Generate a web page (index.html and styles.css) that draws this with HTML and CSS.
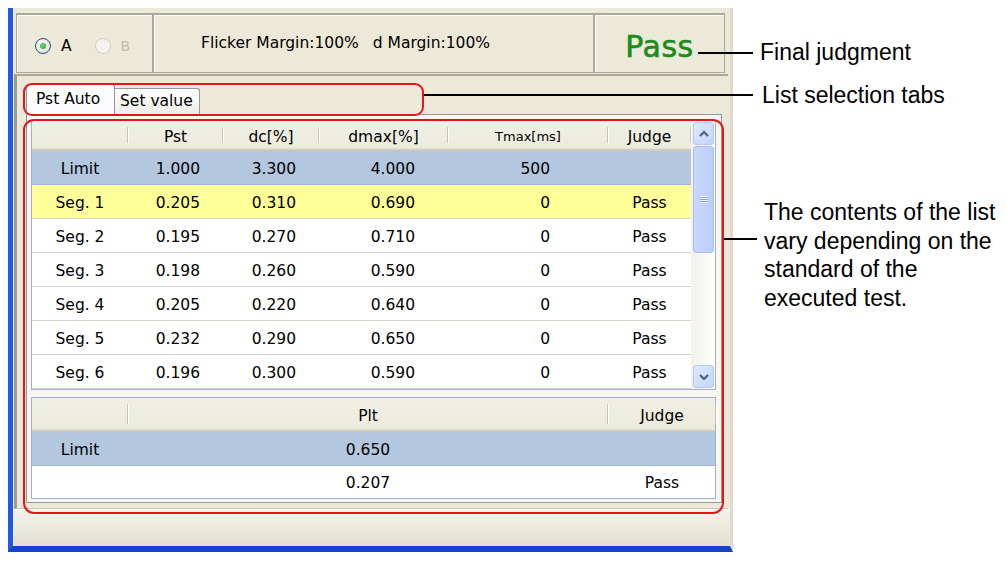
FILE: index.html
```html
<!DOCTYPE html>
<html>
<head>
  <title>Flicker Judgment</title>
  <link rel="stylesheet" href="styles.css">
</head>
<body>
  <div class="window">
    <div class="top-panel">
      <div class="channel-cell">
        <span class="radio checked"><span class="radio-circle"></span>A</span>
        <span class="radio disabled"><span class="radio-circle"></span>B</span>
      </div>
      <div class="margin-cell">
        <span>Flicker Margin:100%</span>
        <span>d Margin:100%</span>
      </div>
      <div class="judge-cell">Pass</div>
    </div>

    <div class="tabs-area">
      <div class="tabs">
        <div class="tab active">Pst Auto</div>
        <div class="tab">Set value</div>
      </div>

      <div class="tab-panel">
        <div class="list pst-list">
          <div class="grid">
            <div class="row head">
              <div class="th"></div>
              <div class="th">Pst</div>
              <div class="th">dc[%]</div>
              <div class="th">dmax[%]</div>
              <div class="th small">Tmax[ms]</div>
              <div class="th">Judge</div>
            </div>
            <div class="row limit">
              <div class="td label">Limit</div>
              <div class="td">1.000</div>
              <div class="td">3.300</div>
              <div class="td">4.000</div>
              <div class="td">500</div>
              <div class="td judge"></div>
            </div>
            <div class="row selected">
              <div class="td label">Seg. 1</div>
              <div class="td">0.205</div>
              <div class="td">0.310</div>
              <div class="td">0.690</div>
              <div class="td">0</div>
              <div class="td judge">Pass</div>
            </div>
            <div class="row">
              <div class="td label">Seg. 2</div>
              <div class="td">0.195</div>
              <div class="td">0.270</div>
              <div class="td">0.710</div>
              <div class="td">0</div>
              <div class="td judge">Pass</div>
            </div>
            <div class="row">
              <div class="td label">Seg. 3</div>
              <div class="td">0.198</div>
              <div class="td">0.260</div>
              <div class="td">0.590</div>
              <div class="td">0</div>
              <div class="td judge">Pass</div>
            </div>
            <div class="row">
              <div class="td label">Seg. 4</div>
              <div class="td">0.205</div>
              <div class="td">0.220</div>
              <div class="td">0.640</div>
              <div class="td">0</div>
              <div class="td judge">Pass</div>
            </div>
            <div class="row">
              <div class="td label">Seg. 5</div>
              <div class="td">0.232</div>
              <div class="td">0.290</div>
              <div class="td">0.650</div>
              <div class="td">0</div>
              <div class="td judge">Pass</div>
            </div>
            <div class="row">
              <div class="td label">Seg. 6</div>
              <div class="td">0.196</div>
              <div class="td">0.300</div>
              <div class="td">0.590</div>
              <div class="td">0</div>
              <div class="td judge">Pass</div>
            </div>
          </div>

          <div class="scrollbar">
            <div class="sb-btn">
              <svg width="14" height="10" viewBox="0 0 14 10"><path d="M3 7 L7 3 L11 7" fill="none" stroke="#4d6185" stroke-width="2.2"/></svg>
            </div>
            <div class="sb-thumb"><span class="grip"></span></div>
            <div class="sb-track"></div>
            <div class="sb-btn">
              <svg width="14" height="10" viewBox="0 0 14 10"><path d="M3 3 L7 7 L11 3" fill="none" stroke="#4d6185" stroke-width="2.2"/></svg>
            </div>
          </div>
        </div>

        <div class="list plt-list">
          <div class="row head">
            <div class="th"></div>
            <div class="th">Plt</div>
            <div class="th">Judge</div>
          </div>
          <div class="row limit">
            <div class="td label">Limit</div>
            <div class="td">0.650</div>
            <div class="td"></div>
          </div>
          <div class="row last">
            <div class="td label"></div>
            <div class="td">0.207</div>
            <div class="td">Pass</div>
          </div>
        </div>
      </div>
    </div>

    <div class="status-bar"></div>
  </div>

  <!-- callouts -->
  <div class="mark mark-tabs"></div>
  <div class="mark mark-list"></div>
  <div class="leader leader-judge"></div>
  <div class="leader leader-tabs"></div>
  <div class="leader leader-list"></div>
  <div class="note note-judge">Final judgment</div>
  <div class="note note-tabs">List selection tabs</div>
  <div class="note note-list">The contents of the list vary depending on the standard of the executed test.</div>
</body>
</html>
```

FILE: styles.css
```css
body {
  margin: 0;
  width: 1006px;
  height: 565px;
  background: #ffffff;
  font-family: "DejaVu Sans", sans-serif;
  font-size: 15.5px;
  color: #000000;
  position: relative;
  overflow: hidden;
}

.window {
  margin: 8px 0 0 8px;
  width: 725px;
  height: 544px;
  box-sizing: border-box;
  background: #ece9d8;
  border-left: 5px solid #2358e0;
  border-right: 3px solid #dedbce;
  border-bottom: 6px solid #1442c9;
  padding-top: 5px;
}

/* top info panel */
.top-panel {
  display: flex;
  width: 709px;
  height: 60px;
  margin-left: 3px;
  box-sizing: border-box;
  border: 1px solid #aca899;
  border-top-width: 2px;
  box-shadow: inset 1px 1px 0 #ffffff;
}

.channel-cell {
  width: 135px;
  display: flex;
  align-items: center;
  padding: 4px 0 0 18px;
  box-sizing: border-box;
  gap: 23px;
}

.radio {
  display: flex;
  align-items: center;
  gap: 10px;
}

.radio-circle {
  width: 16px;
  height: 16px;
  border-radius: 50%;
  box-sizing: border-box;
  border: 1px solid #1c5180;
  background: radial-gradient(circle at 40% 40%, #ffffff, #dcdad0);
  position: relative;
}

.radio.checked .radio-circle:after {
  content: "";
  position: absolute;
  left: 4px;
  top: 4px;
  width: 6px;
  height: 6px;
  border-radius: 50%;
  background: radial-gradient(circle at 40% 40%, #6fe06f, #1f9b1f);
}

.radio.disabled {
  color: #bdbaac;
  font-size: 14px;
}

.radio.disabled .radio-circle {
  border-color: #d2d0c4;
  background: #f4f3ee;
}

.margin-cell {
  width: 441px;
  display: flex;
  align-items: center;
  gap: 14px;
  padding: 0 0 2px 47px;
  box-sizing: border-box;
  border-left: 2px solid #aca899;
  box-shadow: inset 1px 0 0 #ffffff;
}

.judge-cell {
  flex: 1;
  display: flex;
  align-items: center;
  justify-content: center;
  padding-top: 6px;
  border-left: 2px solid #aca899;
  box-shadow: inset 1px 0 0 #ffffff;
  color: #1a8c1a;
  font-size: 30px;
  letter-spacing: 0.5px;
  -webkit-text-stroke: 0.6px #1a8c1a;
}

/* tab control */
.tabs-area {
  width: 714px;
  height: 435px;
  margin: 1px 0 0 1px;
  box-sizing: border-box;
  border-top: 2px solid #aca899;
  border-left: 3px solid #9d9b8e;
  border-bottom: 1px solid #c9c6b6;
  padding: 8px 0 0 9px;
}

.tabs {
  display: flex;
  align-items: flex-end;
  height: 30px;
}

.tab {
  height: 26px;
  box-sizing: border-box;
  border: 1px solid #919b9c;
  border-bottom: none;
  border-left: none;
  border-radius: 0 3px 0 0;
  background: linear-gradient(#ffffff, #eeede5);
  padding: 3px 6px 0 5px;
  white-space: nowrap;
}

.tab.active {
  height: 31px;
  margin-bottom: -1px;
  width: 89px;
  border-left: 1px solid #919b9c;
  border-radius: 3px 3px 0 0;
  background: #fcfcfe;
  padding: 5px 0 0 9px;
  position: relative;
}

.tab-panel {
  width: 696px;
  height: 389px;
  box-sizing: border-box;
  border: 1px solid #919b9c;
  background: #f7f6f1;
  padding: 5px 5px 0 4px;
}

/* list views */
.list {
  border: 1px solid #9db2cf;
  background: #ffffff;
}

.pst-list {
  display: flex;
  height: 270px;
  box-sizing: border-box;
}

.plt-list {
  margin-top: 7px;
}

.row {
  display: grid;
  height: 34px;
  box-sizing: border-box;
  border-bottom: 1px solid #d6d4cb;
  align-items: center;
}

.pst-list .row {
  grid-template-columns: 96px 95px 96px 129px 160px 83px;
}

.plt-list .row {
  grid-template-columns: 96px 480px 108px;
}

.row.head {
  height: 30px;
  border-bottom: none;
  background: linear-gradient(#f1f0e7, #ebeadb);
  box-shadow: inset 0 -1px 0 #cbc7b8, inset 0 -2px 0 #d6d2c2, inset 0 -3px 0 #e2decd;
}

.plt-list .row.head {
  height: 34px;
}

.row.limit {
  background: #b3c7df;
  border-bottom-color: #a4b6cc;
}

.row.selected {
  background: #ffff99;
}

.row.last {
  border-bottom: none;
  height: 32px;
}

.th {
  position: relative;
  height: 100%;
  display: flex;
  align-items: center;
  justify-content: center;
  padding-top: 1px;
  box-sizing: border-box;
}

.th:after {
  content: "";
  position: absolute;
  right: 0;
  top: 6px;
  bottom: 8px;
  width: 1px;
  background: #c7c5b2;
  box-shadow: 1px 0 0 #ffffff;
}

.th.small {
  font-size: 13px;
}

.td {
  text-align: right;
  padding-top: 2px;
}

.pst-list .td:nth-child(2),
.pst-list .td:nth-child(3) {
  padding-right: 23px;
}

.pst-list .td:nth-child(4) {
  padding-right: 33px;
}

.pst-list .td:nth-child(5) {
  padding-right: 58px;
}

.td.label,
.td.judge,
.plt-list .td {
  text-align: center;
}

/* scrollbar */
.scrollbar {
  width: 25px;
  display: flex;
  flex-direction: column;
  padding: 1px 1px 1px 2px;
  box-sizing: border-box;
  background: linear-gradient(90deg, #f3f1ec, #fefefb);
  gap: 1px;
}

.sb-btn {
  height: 23px;
  border: 1px solid #b6c8f2;
  border-radius: 3px;
  background: linear-gradient(135deg, #e1eafe, #c1d3fb);
  display: flex;
  align-items: center;
  justify-content: center;
  box-sizing: border-box;
}

.sb-thumb {
  height: 107px;
  border: 1px solid #a8bef2;
  border-radius: 3px;
  background: linear-gradient(90deg, #c9d8fc, #bccdf7);
  display: flex;
  align-items: center;
  justify-content: center;
  box-sizing: border-box;
}

.grip {
  width: 8px;
  height: 7px;
  background: repeating-linear-gradient(#eef3fe 0 1px, #8ca4dc 1px 2px);
}

.sb-track {
  flex: 1;
}

.status-bar {
  height: 37px;
  box-sizing: border-box;
  border-top: 1px solid #ffffff;
  background: linear-gradient(#f3f2eb, #e4e1d2);
}

/* callouts */
.mark {
  position: absolute;
  box-sizing: border-box;
  border: 2.5px solid #e8141c;
}

.mark-tabs {
  left: 23px;
  top: 83px;
  width: 401px;
  height: 33px;
  border-radius: 9px;
}

.mark-list {
  left: 23px;
  top: 119px;
  width: 701px;
  height: 395px;
  border-radius: 11px;
}

.leader {
  position: absolute;
  height: 2px;
  background: #000000;
}

.leader-judge {
  left: 698px;
  top: 52px;
  width: 55px;
}

.leader-tabs {
  left: 424px;
  top: 94px;
  width: 329px;
}

.leader-list {
  left: 724px;
  top: 238px;
  width: 33px;
}

.note {
  position: absolute;
  font-family: "Liberation Sans", Arial, sans-serif;
  font-size: 23px;
  line-height: 28.5px;
  color: #000000;
}

.note-judge {
  left: 760px;
  top: 38px;
}

.note-tabs {
  left: 762px;
  top: 81px;
}

.note-list {
  left: 764px;
  top: 198px;
  width: 240px;
}
```
